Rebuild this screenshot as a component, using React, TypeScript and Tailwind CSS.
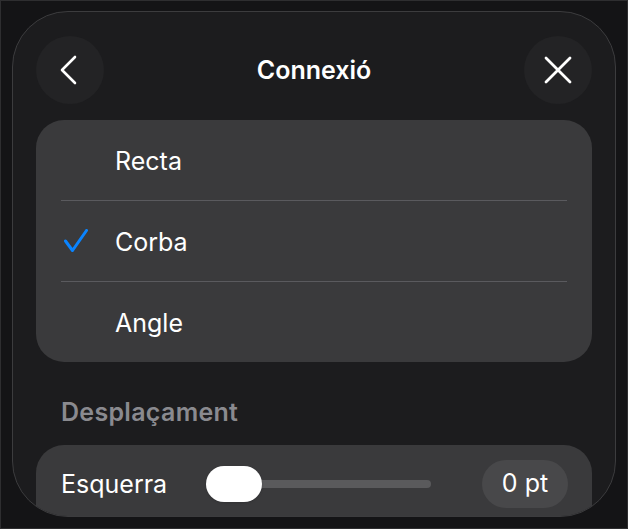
const font = { fontFamily: "Inter, 'Noto Sans', sans-serif" };

const Check = () => (
  <svg width="24" height="24" viewBox="0 0 24 24" fill="none">
    <path
      d="M1.5 12 L8.5 21.5 L22.5 1.5"
      stroke="#0a84ff"
      strokeWidth="3"
      strokeLinecap="round"
      strokeLinejoin="round"
    />
  </svg>
);

const options = ["Recta", "Corba", "Angle"];

export default function App() {
  return (
    <div
      className="w-[628px] h-[529px] bg-[#141416] border border-[#2e2e30] pt-[10px] pl-[11px] overflow-hidden"
      style={font}
    >
      <div className="w-[604px] h-[506px] rounded-[56px] border border-[#3c3c3e] bg-[#1c1c1e] overflow-hidden px-[23px] pt-[24px] flex flex-col">
        {/* header */}
        <div className="flex items-center justify-between h-[68px] shrink-0">
          <button className="w-[68px] h-[68px] rounded-full bg-[#232325] flex items-center justify-center">
            <svg width="28" height="32" viewBox="0 0 28 32" fill="none">
              <path
                d="M19 3 L6 16 L19 29"
                stroke="white"
                strokeWidth="2.6"
                strokeLinecap="round"
                strokeLinejoin="round"
              />
            </svg>
          </button>
          <h1 className="text-white text-[25px] font-semibold tracking-[0px] leading-[30px]">Connexió</h1>
          <button className="w-[68px] h-[68px] rounded-full bg-[#232325] flex items-center justify-center">
            <svg width="30" height="30" viewBox="0 0 30 30" fill="none">
              <path
                d="M3 3 L27 27 M27 3 L3 27"
                stroke="white"
                strokeWidth="2.8"
                strokeLinecap="round"
              />
            </svg>
          </button>
        </div>

        {/* options */}
        <div className="mt-[16px] rounded-[28px] bg-[#3a3a3c] shrink-0">
          {options.map((o, i) => (
            <div key={o}>
              {i > 0 && <div className="mx-[25px] h-px bg-[#5a5a5e]" />}
              <div className="h-[80px] flex items-center pl-[28px]">
                <div className="w-[24px] h-[24px]">{o === "Corba" && <Check />}</div>
                <span className="ml-[27px] text-white text-[25px] leading-[30px] pt-[2px]">{o}</span>
              </div>
            </div>
          ))}
        </div>

        {/* section */}
        <div className="mt-[35px] pl-[25px] text-[#8a8a8f] text-[25px] font-semibold tracking-[0.3px] leading-[30px]">
          Desplaçament
        </div>

        <div className="mt-[18px] h-[90px] shrink-0 rounded-[28px] bg-[#3a3a3c] pl-[25px] pr-[24px] pt-[15px]">
          <div className="h-[48px] flex items-center">
            <span className="text-white text-[25px] w-[145px] leading-[30px]">Esquerra</span>
            <div className="relative w-[225px] h-[36px] flex items-center">
              <div className="absolute left-0 right-0 h-[8px] rounded-full bg-[#5a5a5c]" />
              <div className="relative w-[56px] h-[36px] rounded-full bg-white shadow" />
            </div>
            <div className="ml-auto w-[86px] h-[48px] rounded-full bg-[#48484a] flex items-center justify-center text-white text-[25px]">
              0 pt
            </div>
          </div>
        </div>
      </div>
    </div>
  );
}
